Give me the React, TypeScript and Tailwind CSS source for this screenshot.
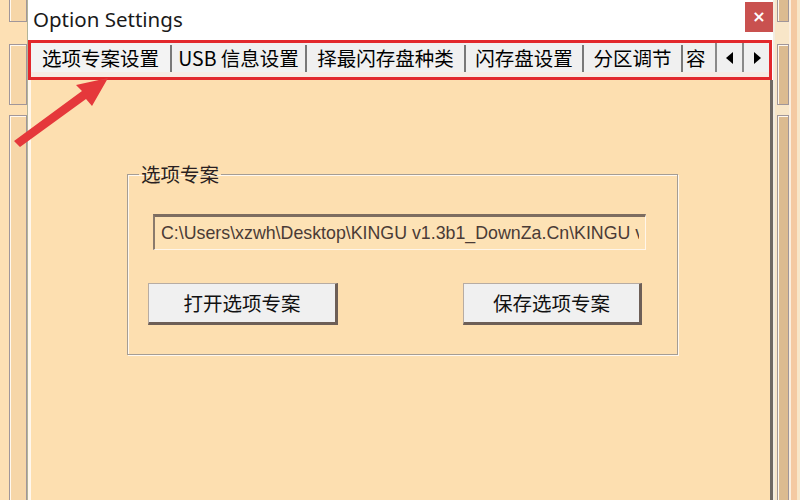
import React from "react";

const tabs = [
  { label: "选项专案设置", w: "w-[139px]", active: true },
  { label: "USB 信息设置", w: "w-[133px]" },
  { label: "择最闪存盘种类", w: "w-[157px]" },
  { label: "闪存盘设置", w: "w-[116px]" },
  { label: "分区调节", w: "w-[97px]" },
];

const cjk = "font-['Noto_Sans_CJK_SC',sans-serif]";

function SideBoxes({ fill }: { fill: string }) {
  return (
    <div className="flex flex-col h-full">
      <div className={`h-[22px] border border-t-0 border-[#a0969a] shadow-[inset_1px_0_0_#fff8ee] ${fill}`} />
      <div className={`mt-[22px] h-[61px] border border-[#a0969a] shadow-[inset_1px_1px_0_#fff8ee] ${fill}`} />
      <div className={`mt-[10px] flex-1 border border-b-0 border-[#a0969a] shadow-[inset_1px_1px_0_#fff8ee] ${fill}`} />
    </div>
  );
}

function Arrow({ dir }: { dir: "left" | "right" }) {
  return (
    <div className="w-[27px] flex items-center justify-center bg-[#f0f0f0] border-l-2 border-[#8a8a8a]">
      <svg width="8" height="12" viewBox="0 0 8 12">
        {dir === "left" ? <polygon points="7,0 7,12 0,6" fill="#000" /> : <polygon points="1,0 1,12 8,6" fill="#000" />}
      </svg>
    </div>
  );
}

export default function App() {
  return (
    <div className="relative w-[800px] h-[500px] overflow-hidden flex bg-[#fde0b4]">
      {/* parent window, left edge */}
      <div className="w-[28px] h-full flex bg-[#fde0b4]">
        <div className="w-[9px]" />
        <div className="w-[18px] h-full">
          <SideBoxes fill="bg-[#f6d6a8]" />
        </div>
        <div className="w-px bg-[#b2b498]" />
      </div>

      {/* dialog */}
      <div className="w-[747px] h-full flex flex-col bg-white border-r-2 border-[#f3ece0]">
        <div className="h-[38px] flex items-start justify-between">
          <span className="mt-[5px] ml-[5px] text-[20.5px] leading-[28px] text-[#1a1a1a] font-['Noto_Sans',sans-serif]">
            Option Settings
          </span>
          <div className="mt-[2px] w-[28px] h-[30px] bg-[#c9514f] flex items-center justify-center text-white text-[16px] font-bold font-['DejaVu_Sans',sans-serif]">
            ×
          </div>
        </div>

        <div className="mt-[2px] mr-px h-[40px] border-[3px] border-[#e2282c] flex flex-col bg-[#f7ebe4]">
          <div className={`h-[29px] flex bg-[#f0f0f0] text-[19.5px] leading-none text-black ${cjk}`}>
            {tabs.map((t) => (
              <React.Fragment key={t.label}>
                <div className={`${t.w} flex items-center justify-center whitespace-nowrap ${t.active ? "bg-[#f3f3f3]" : ""}`}>
                  {t.label}
                </div>
                <div className="w-[2px] mt-[2px] bg-[#787878]" />
              </React.Fragment>
            ))}
            <div className="w-[32px] whitespace-nowrap flex items-center pl-[3px]">容</div>
            <Arrow dir="left" />
            <Arrow dir="right" />
          </div>
          <div className="flex-1" />
        </div>

        <div className="flex-1 bg-[#fddfb0] border-l-[3px] border-l-[#fff7ec] border-r-[3px] border-r-[#6f6863]">
          <fieldset className="ml-[96px] mt-[83px] w-[551px] h-[192px] border border-[#a59d94] shadow-[inset_1px_1px_0_#fff8ef,1px_1px_0_#fff8ef]">
            <legend className={`ml-[11px] px-[2px] text-[19.5px] leading-[22px] text-[#2a1f22] ${cjk}`}>选项专案</legend>
            <input
              readOnly
              value="C:\Users\xzwh\Desktop\KINGU v1.3b1_DownZa.Cn\KINGU v1.3b1\options.ini"
              className="block mt-[29px] ml-[25px] w-[493px] h-[36px] px-[6px] bg-[#fde2b5] border-t-[3px] border-l-2 border-r border-b border-t-[#7d6d60] border-l-[#8a7a6c] border-r-[#fff6ea] border-b-[#fff6ea] text-[17.8px] text-[#4a3b36] font-['Liberation_Sans',Arial,sans-serif] outline-none"
            />
            <div className={`mt-[33px] flex text-[19.5px] text-[#111] ${cjk}`}>
              <button className="ml-[20px] w-[190px] h-[42px] bg-[#f0f0f0] border border-[#b7aca3] border-r-[3px] border-b-[3px] border-r-[#6d5f57] border-b-[#6d5f57]">
                打开选项专案
              </button>
              <button className="ml-[125px] w-[179px] h-[42px] bg-[#f0f0f0] border border-[#b7aca3] border-r-[3px] border-b-[3px] border-r-[#6d5f57] border-b-[#6d5f57]">
                保存选项专案
              </button>
            </div>
          </fieldset>
        </div>
      </div>

      {/* parent window, right edge */}
      <div className="flex-1 h-full flex bg-[#f8e6c8]">
        <div className="w-[2px]" />
        <div className="w-[12px] h-full">
          <SideBoxes fill="bg-[#dcbb90]" />
        </div>
        <div className="w-[2px] bg-[#fbeede]" />
        <div className="w-[6px] bg-[#f4c9a2]" />
      </div>

      {/* annotation arrow */}
      <svg className="absolute left-0 top-0 pointer-events-none" width="800" height="500">
        <polygon points="14,141 82,91 76,85 108,78 92,106 86,99 20,147" fill="#e5383b" />
      </svg>
    </div>
  );
}
